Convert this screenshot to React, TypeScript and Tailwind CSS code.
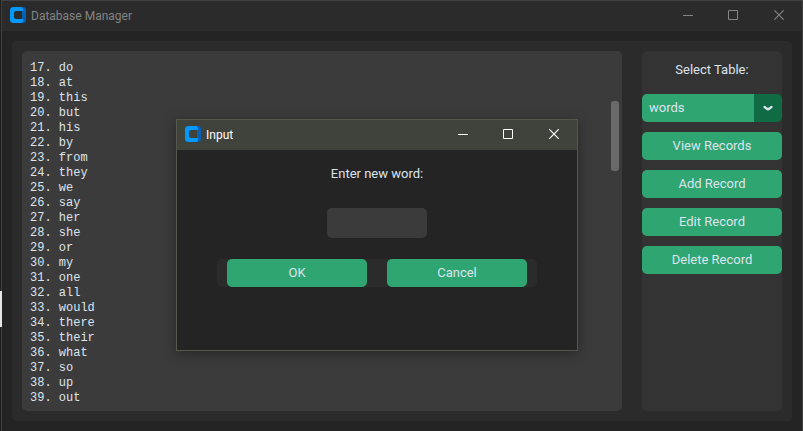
const WORDS = [
  "do", "at", "this", "but", "his", "by", "from", "they", "we", "say", "her", "she",
  "or", "my", "one", "all", "would", "there", "their", "what", "so", "up", "out",
];
const FIRST = 17;
const ACTIONS = ["View Records", "Add Record", "Edit Record", "Delete Record"];

function AppIcon() {
  return (
    <svg width="16" height="16" viewBox="0 0 16 16" aria-hidden="true">
      <path d="M12 0h1a3 3 0 0 1 3 3v10a3 3 0 0 1-3 3h-1z" fill="#0460b0" />
      <path
        d="M3.500 0H11.500Q13 .5 13 2.500V4H6Q4 4 4 6V10Q4 12 6 12H13V13.500Q13 15.500 11.500 16H3.500A3.500 3.500 0 0 1 0 12.500V3.500A3.500 3.500 0 0 1 3.500 0Z"
        fill="#0398fb"
      />
    </svg>
  );
}

function WindowControls() {
  return (
    <div className="flex h-full">
      <button type="button" aria-label="Minimize" className="flex w-[45px] items-center justify-center">
        <svg width="10" height="10" viewBox="0 0 10 10" stroke="currentColor" fill="none">
          <path d="M0 5.500H10" />
        </svg>
      </button>
      <button type="button" aria-label="Maximize" className="flex w-[45px] items-center justify-center">
        <svg width="10" height="10" viewBox="0 0 10 10" stroke="currentColor" fill="none">
          <path d="M.5 .5H9.500V9.500H.5Z" />
        </svg>
      </button>
      <button type="button" aria-label="Close" className="flex w-[47px] items-center justify-center">
        <svg width="10" height="10" viewBox="0 0 10 10" stroke="currentColor" strokeWidth="1.200" fill="none">
          <path d="M.3 .3L9.700 9.700M9.700 .3L.3 9.700" />
        </svg>
      </button>
    </div>
  );
}

function TitleBar({ title, tone }: { title: string; tone: string }) {
  return (
    <header className={`flex h-[30px] items-center justify-between pb-0.5 pl-2 ${tone}`}>
      <div className="flex items-center gap-[5px] text-xs">
        <AppIcon />
        <h1 className="pt-0.5">{title}</h1>
      </div>
      <WindowControls />
    </header>
  );
}

const BUTTON = "h-7 w-full rounded-[5px] bg-[#2fa572] text-center text-[#dce4ee]";

function InputDialog() {
  return (
    <div
      role="dialog"
      aria-label="Input"
      className="absolute top-[119px] left-44 w-[402px] border border-[#55564c] bg-[#242424] shadow-[0_3px_12px_rgba(0,0,0,0.35)]"
    >
      <TitleBar title="Input" tone="bg-[#40433b] text-white" />
      <form className="flex h-[200px] flex-col items-center pt-[14px]" onSubmit={(e) => e.preventDefault()}>
        <label htmlFor="new-word" className="leading-5 text-[#dce4ee]">
          Enter new word:
        </label>
        <input id="new-word" className="mt-6 h-[30px] w-[100px] rounded-[5px] bg-[#3b3b3b] px-2 text-[#dce4ee] outline-none" />
        <div className="mt-[21px] flex w-80 gap-5 rounded-[5px] bg-[#2b2b2b] px-[10px]">
          <button type="submit" className={BUTTON}>OK</button>
          <button type="button" className={BUTTON}>Cancel</button>
        </div>
      </form>
    </div>
  );
}

export default function App() {
  return (
    <div className="relative min-h-screen bg-[#1e1e1e] pl-px font-[Roboto,sans-serif] text-[13px]">
      <div className="absolute top-[291px] left-0 h-9 w-0.5 bg-[#e6e6e6]" />
      <div className="flex min-h-screen flex-col border-x border-t border-[#414141] bg-[#242424]">
        <TitleBar title="Database Manager" tone="bg-[#2b2b2b] text-[#838383]" />
        <main className="m-[10px] flex flex-1 gap-5 rounded-[5px] bg-[#2b2b2b] p-[10px]">
          <section className="flex flex-1 rounded-[5px] bg-[#3b3b3b] pr-[3px]">
            <textarea
              readOnly
              aria-label="Records"
              rows={WORDS.length}
              className="flex-1 resize-none overflow-hidden bg-transparent pt-[10px] pl-2 font-['Liberation_Mono',monospace] text-xs leading-[15px] text-[#dce4ee] outline-none"
              value={WORDS.map((w, i) => `${FIRST + i}. ${w}`).join("\n")}
            />
            <div className="mt-[50px] h-[70px] w-2 rounded-[3px] bg-[#696969]" />
          </section>
          <aside className="flex w-[140px] flex-col gap-[10px] rounded-[5px] bg-[#333333] pt-[9px]">
            <label htmlFor="table" className="mb-1 text-center leading-5 text-[#dce4ee]">
              Select Table:
            </label>
            <div className="relative">
              <select
                id="table"
                className="block h-7 w-full appearance-none rounded-[5px] bg-linear-to-r from-[#2fa572] from-80% to-[#106a43] to-80% pl-[7px] text-[#dce4ee]"
              >
                <option>words</option>
              </select>
              <svg
                className="pointer-events-none absolute top-[11px] right-[9px]"
                width="10"
                height="7"
                viewBox="0 0 10 7"
                fill="none"
                stroke="#dce4ee"
                strokeWidth="2.200"
                strokeLinecap="round"
                strokeLinejoin="round"
              >
                <path d="M1.500 2L5 4.500L8.500 2" />
              </svg>
            </div>
            {ACTIONS.map((action) => (
              <button key={action} type="button" className={BUTTON}>
                {action}
              </button>
            ))}
          </aside>
        </main>
      </div>
      <InputDialog />
    </div>
  );
}
